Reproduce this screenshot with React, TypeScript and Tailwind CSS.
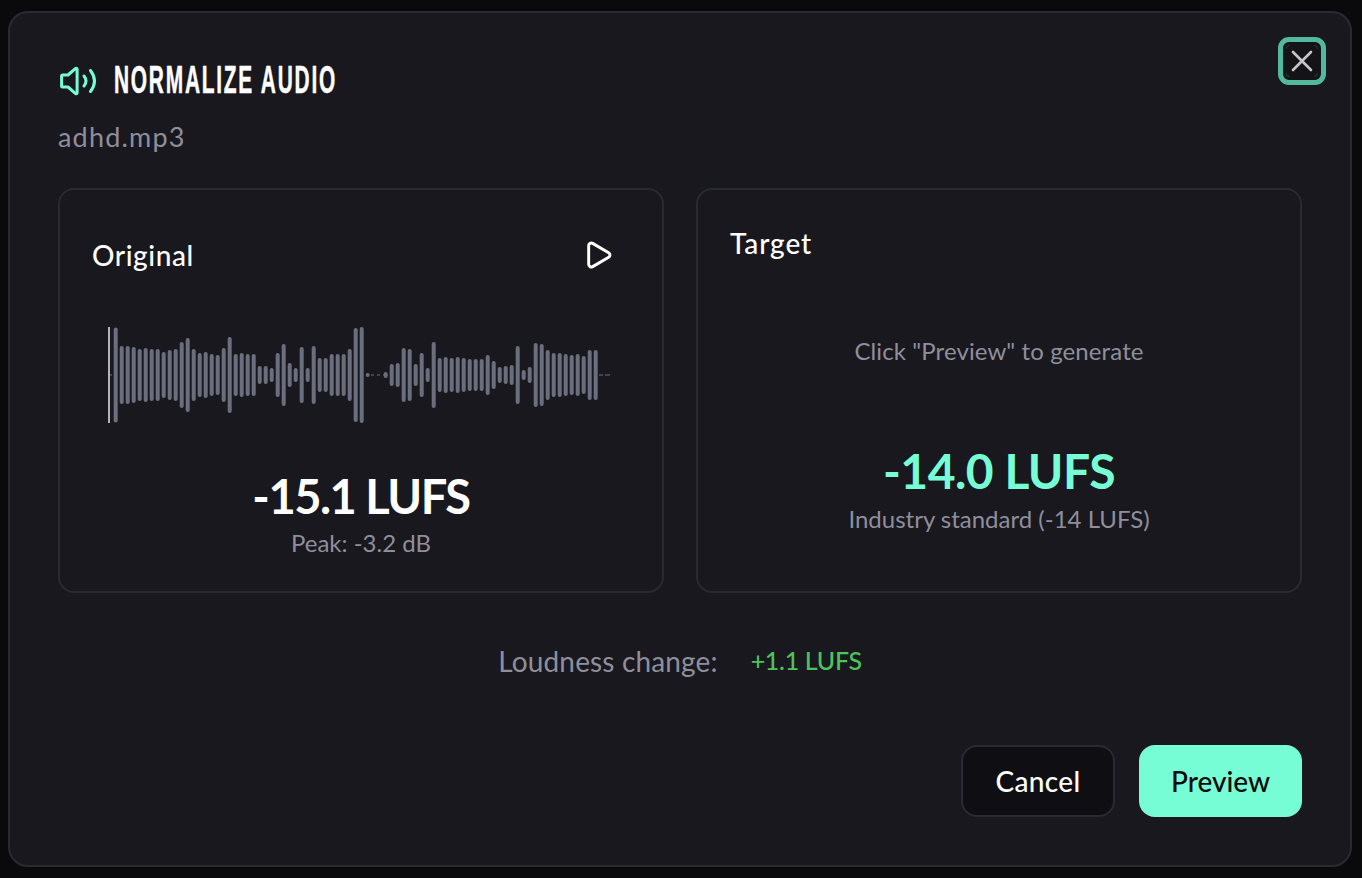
import { Play } from "lucide-react";

const bars: [number, number][] = [
  95,58,58,56,52,54,52,52,46,50,52,66,74,52,44,46,42,40,54,76,42,44,42,42,18,18,14,44,62,24,14,56,14,58,34,34,42,42,42,52,94,96,4,0,0,6,22,24,54,52,22,44,14,66,34,36,34,36,34,32,32,32,40,28,16,18,20,58,10,16,64,62,50,44,44,42,40,42,38,50,50,
].map((h, i) => [7.7 + i * 6, h] as [number, number]);

export default function App() {
  return (
    <div className="h-[878px] w-full overflow-hidden bg-[#0a0a0c] px-[8px] pt-[11px] font-['Lato','Noto_Sans',sans-serif]">
      <div className="relative flex h-[856px] w-[1344px] flex-col rounded-[20px] border-2 border-[#2a2a33] bg-[#18181e] px-[48px] pt-[46px]">
        <button className="absolute right-[24px] top-[24px] flex h-[48px] w-[48px] items-center justify-center rounded-[11px] border-[5px] border-[#52b99f] bg-[#141418]">
          <CloseGlyph />
        </button>

        <div className="flex h-[44px] items-center">
          <SpeakerIcon />
          <h2 className="-mt-[3px] ml-[16px] w-[220px] origin-left scale-x-[0.55] whitespace-nowrap font-['Liberation_Sans',sans-serif] text-[38px] font-bold leading-none tracking-[3.2px] text-white [-webkit-text-stroke:0.5px_white]">NORMALIZE AUDIO</h2>
        </div>
        <p className="mt-[15px] text-[27px] leading-[38px] tracking-[1.2px] text-[#8f8f9c]">adhd.mp3</p>

        <div className="mt-[32px] grid h-[405px] grid-cols-2 gap-[32px]">
          <section className="flex flex-col rounded-[16px] border-2 border-[#2a2a33] px-[32px] pt-[46px]">
            <div className="flex h-[38px] items-center justify-between">
              <h3 className="text-[28px] font-medium leading-none tracking-[0.6px] text-white">Original</h3>
              <Play size={32} strokeWidth={2.2} className="mr-[16px] text-white" />
            </div>
            <svg width="520" height="100" viewBox="0 0 520 100" className="ml-[16px] mt-[52px]" fill="none">
              <rect x="0" y="1" width="2" height="96" fill="#b4b4bc" />
              <path d="M2 49h2" stroke="#6b6f7d" />
              {bars.map(([x, h], i) =>
                h > 0 ? <rect key={i} x={x - 2} y={49 - h / 2} width="4" height={h} rx="2" fill="#6b6f7d" /> : null
              )}
              <path d="M263 49h3M269 49h3M275 49h2M491 49h4M497 49h5" stroke="#6b6f7d" />
            </svg>
            <p className="mt-[40px] text-center text-[47px] font-bold leading-[60px] tracking-[-1.5px] text-white">-15.1 LUFS</p>
            <p className="mt-[2px] text-center text-[24px] leading-[30px] text-[#8f8f9c]">Peak: -3.2 dB</p>
          </section>

          <section className="flex flex-col rounded-[16px] border-2 border-[#2a2a33] px-[32px] pt-[34px]">
            <h3 className="h-[38px] text-[28px] font-medium leading-[38px] tracking-[0.9px] text-white">Target</h3>
            <p className="mt-[74px] text-center text-[24px] leading-[30px] tracking-[0.1px] text-[#8f8f9c]">Click "Preview" to generate</p>
            <p className="mt-[75px] text-center text-[48px] font-bold leading-[60px] tracking-[-0.5px] text-[#77fdd5]">-14.0 LUFS</p>
            <p className="mt-[3px] text-center text-[24px] leading-[30px] text-[#8f8f9c]">Industry standard (-14 LUFS)</p>
          </section>
        </div>

        <div className="mt-[51px] flex h-[34px] items-center justify-center gap-[33px]">
          <span className="text-[28px] tracking-[0.15px] text-[#8f8f9c]">Loudness change:</span>
          <span className="text-[25px] font-medium tracking-[-0.3px] text-[#4ec35c]">+1.1 LUFS</span>
        </div>

        <div className="mt-[67px] flex justify-end gap-[24px]">
          <button className="h-[72px] w-[154px] rounded-[16px] border-2 border-[#2a2a33] bg-[#0f0f13] text-[28px] font-medium tracking-[0.3px] text-white">Cancel</button>
          <button className="h-[72px] w-[163px] rounded-[16px] bg-[#77fdd5] text-[28px] font-medium text-[#0a0a0c]">Preview</button>
        </div>
      </div>
    </div>
  );
}

function CloseGlyph() {
  return (
    <svg width="38" height="38" viewBox="0 0 38 38" fill="none" strokeLinecap="round">
      <path d="M10 10l18 18M28 10L10 28" stroke="#c6c6ca" strokeWidth="2.6" />
      <path d="M3 6.5a3 3 0 0 1 3-3M31.5 3.5a3 3 0 0 1 3 3M34.5 31.5a3 3 0 0 1-3 3M6 34.5a3 3 0 0 1-3-3" stroke="#24413a" strokeWidth="1" />
    </svg>
  );
}

function SpeakerIcon() {
  return (
    <svg width="38" height="30" viewBox="0 0 38 30" fill="none" stroke="#77fdd5" strokeWidth="3" strokeLinecap="round" strokeLinejoin="round" className="ml-[2px]">
      <path d="M1.6 10a1 1 0 0 1 1-1h5.4l7.6-6.6c.6-.5 1.5-.1 1.5.7v23.8c0 .8-.9 1.2-1.5.7L8 21H2.6a1 1 0 0 1-1-1z" />
      <path d="M24 10q4 5 0 10" />
      <path d="M30.5 4.5q8 10.5 0 21" />
    </svg>
  );
}
